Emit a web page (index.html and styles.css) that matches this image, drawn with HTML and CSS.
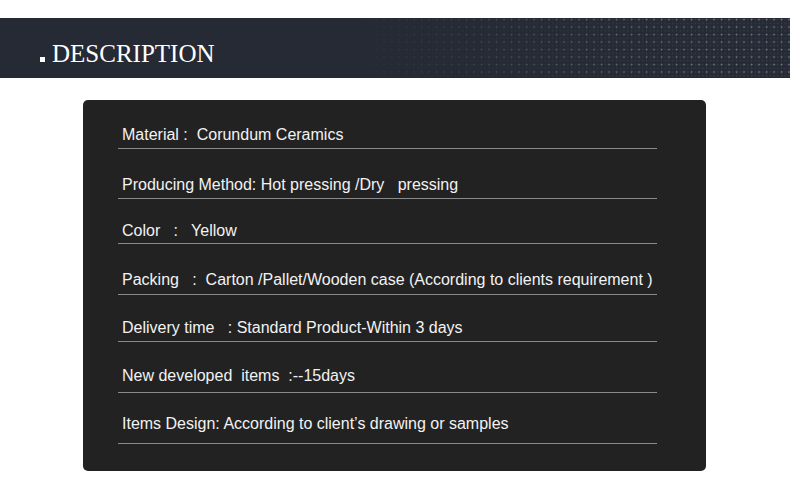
FILE: index.html
```html
<!DOCTYPE html>
<html>
<head>
<meta charset="utf-8">
<link rel="stylesheet" href="styles.css">
</head>
<body>
<div class="banner">
  <h2 class="title"><span class="mark"></span>DESCRIPTION</h2>
</div>
<div class="card">
  <div class="row r1">Material :  Corundum Ceramics</div>
  <div class="row r2">Producing Method: Hot pressing /Dry   pressing</div>
  <div class="row r3">Color   :   Yellow</div>
  <div class="row r4">Packing   :  Carton /Pallet/Wooden case (According to clients requirement )</div>
  <div class="row r5">Delivery time   : Standard Product-Within 3 days</div>
  <div class="row r6">New developed  items  :--15days</div>
  <div class="row r7">Items Design: According to client’s drawing or samples</div>
</div>
</body>
</html>
```
FILE: styles.css
```css
html, body {
  margin: 0;
  padding: 0;
  background: #fff;
}
body {
  padding-top: 18px;
  width: 790px;
}
.banner {
  position: relative;
  height: 60px;
  background: #252a34;
  display: flex;
  align-items: flex-start;
  overflow: hidden;
}
.banner::after {
  content: "";
  position: absolute;
  inset: 0;
  background-image:
    radial-gradient(circle at 1.5px 1.5px, rgba(140,150,170,0.55) 0.8px, transparent 1.2px),
    radial-gradient(circle at 1.5px 1.5px, rgba(120,130,150,0.22) 0.7px, transparent 1.1px);
  background-size: 7.5px 7.5px, 3.75px 3.75px;
  -webkit-mask-image: linear-gradient(to right, transparent 0, transparent 340px, rgba(0,0,0,0.3) 460px, rgba(0,0,0,0.8) 610px, #000 720px);
  mask-image: linear-gradient(to right, transparent 0, transparent 340px, rgba(0,0,0,0.3) 460px, rgba(0,0,0,0.8) 610px, #000 720px);
}
.title {
  position: relative;
  z-index: 1;
  margin: 0;
  padding: 22px 0 0 40px;
  font-family: "Liberation Serif", "Times New Roman", serif;
  font-weight: normal;
  font-size: 25px;
  line-height: 27px;
  color: #fff;
}
.mark {
  display: inline-block;
  width: 5px;
  height: 5px;
  background: #fff;
  margin-right: 7px;
  vertical-align: baseline;
}
.card {
  margin: 22px 0 0 83px;
  width: 623px;
  height: 371px;
  box-sizing: border-box;
  background: #222;
  border-radius: 5px;
  padding: 0 49px 0 35px;
}
.row {
  font-family: "Liberation Sans", Arial, sans-serif;
  font-size: 16px;
  line-height: 18px;
  color: #f2f2f2;
  white-space: pre;
  padding-left: 4px;
  border-bottom: 1px solid #8a8a8a;
}
.r1 { padding-top: 26px; padding-bottom: 4px; }
.r2 { padding-top: 27px; padding-bottom: 4px; }
.r3 { padding-top: 23px; padding-bottom: 3px; }
.r4 { padding-top: 27px; padding-bottom: 5px; }
.r5 { padding-top: 24px; padding-bottom: 4px; }
.r6 { padding-top: 25px; padding-bottom: 7px; }
.r7 { padding-top: 22px; padding-bottom: 10px; }
```
